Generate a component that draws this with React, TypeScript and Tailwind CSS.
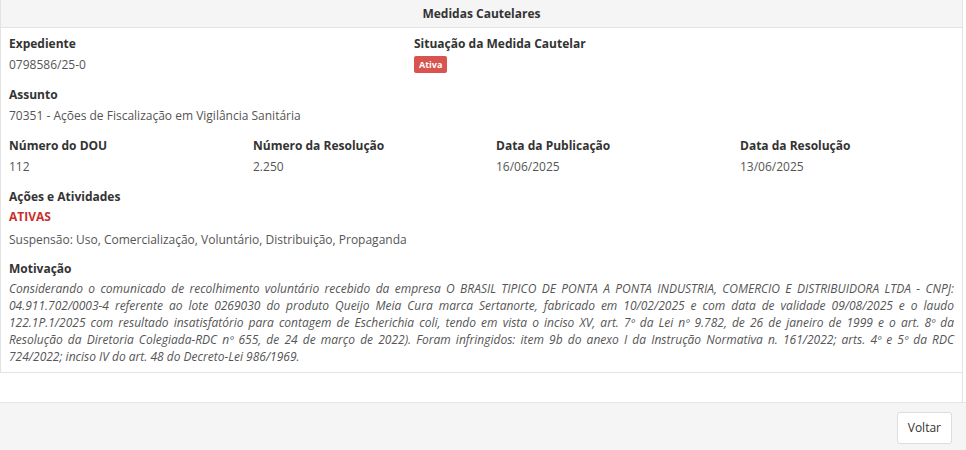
const Field = ({ label, value }: { label: string; value: string }) => (
  <div>
    <p className="font-bold text-[#333] leading-[17px]">{label}</p>
    <p className="mt-1 text-[#555] leading-[17px]">{value}</p>
  </div>
);

const motivacao = [
  'Considerando o comunicado de recolhimento voluntário recebido da empresa O BRASIL TIPICO DE PONTA A PONTA INDUSTRIA, COMERCIO E DISTRIBUIDORA LTDA - CNPJ:',
  '04.911.702/0003-4 referente ao lote 0269030 do produto Queijo Meia Cura marca Sertanorte, fabricado em 10/02/2025 e com data de validade 09/08/2025 e o laudo',
  '122.1P.1/2025 com resultado insatisfatório para contagem de Escherichia coli, tendo em vista o inciso XV, art. 7º da Lei nº 9.782, de 26 de janeiro de 1999 e o art. 8º da',
  'Resolução da Diretoria Colegiada-RDC nº 655, de 24 de março de 2022). Foram infringidos: item 9b do anexo I da Instrução Normativa n. 161/2022; arts. 4º e 5º da RDC',
  '724/2022; inciso IV do art. 48 do Decreto-Lei 986/1969.',
];

export default function App() {
  return (
    <div className="w-[966px] h-[450px] bg-white text-[12px] text-[#333] font-['Open_Sans',sans-serif] flex flex-col overflow-hidden">
      <div className="w-[963px] border-r border-[#e3e3e3]">
        <div className="border-l border-b border-[#e3e3e3]">
          <div className="h-[28px] bg-[#f5f5f5] border-b border-[#e3e3e3] flex items-center justify-center font-bold">
            Medidas Cautelares
          </div>
          <div className="px-[8px] pt-[7px] pb-[7px] flex flex-col">
            <div className="grid grid-cols-[405px_1fr]">
              <Field label="Expediente" value="0798586/25-0" />
              <div>
                <p className="font-bold leading-[17px]">Situação da Medida Cautelar</p>
                <span className="mt-[4px] inline-block bg-[#d9534f] text-white font-bold text-[9px] leading-[17px] px-[5px] rounded-[2px] align-top">
                  Ativa
                </span>
              </div>
            </div>
            <div className="mt-[13px]">
              <Field label="Assunto" value="70351 - Ações de Fiscalização em Vigilância Sanitária" />
            </div>
            <div className="mt-[13px] grid grid-cols-[244px_243px_244px_1fr]">
              <Field label="Número do DOU" value="112" />
              <Field label="Número da Resolução" value="2.250" />
              <Field label="Data da Publicação" value="16/06/2025" />
              <Field label="Data da Resolução" value="13/06/2025" />
            </div>
            <div className="mt-[13px]">
              <p className="font-bold leading-[17px]">Ações e Atividades</p>
              <p className="mt-[3px] font-bold text-[#c9302c] leading-[17px]">ATIVAS</p>
              <p className="mt-[6px] text-[#555] leading-[17px]">
                Suspensão: Uso, Comercialização, Voluntário, Distribuição, Propaganda
              </p>
            </div>
            <div className="mt-[12px]">
              <p className="font-bold leading-[17px]">Motivação</p>
              <div className="mt-[3px] italic text-[#555] leading-[17px]">
                {motivacao.map((line, i) => (
                  <span
                    key={i}
                    className={
                      i < motivacao.length - 1
                        ? 'block text-justify [text-align-last:justify]'
                        : 'block'
                    }
                  >
                    {line}
                  </span>
                ))}
              </div>
            </div>
          </div>
        </div>
        <div className="h-[29px]" />
      </div>
      <div className="flex-1 bg-[#f5f5f5] border-t border-[#e5e5e5] flex justify-end items-start pt-[9px] pr-[14px]">
        <button className="h-[32px] px-[10px] bg-white border border-[#ddd] rounded-[3px] text-[#333] text-[12px]">
          Voltar
        </button>
      </div>
    </div>
  );
}
